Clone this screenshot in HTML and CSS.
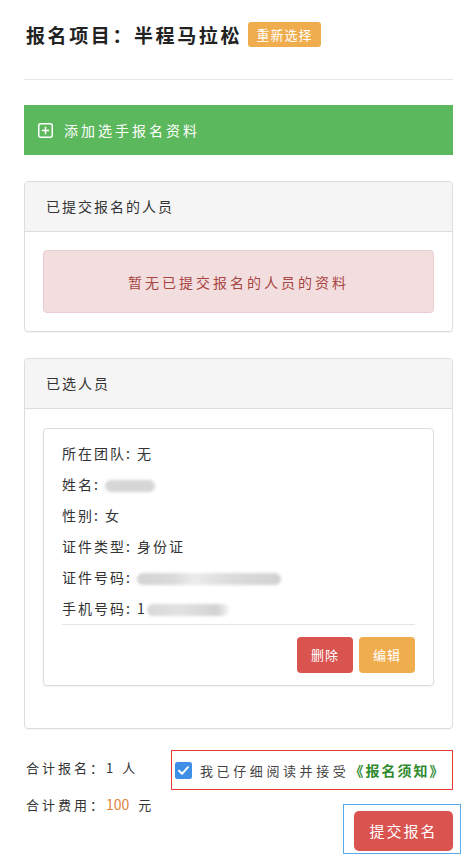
FILE: index.html
```html
<!DOCTYPE html>
<html lang="zh-CN">
	<head>
		<meta charset="utf-8">
		<meta name="viewport" content="width=device-width, initial-scale=1.0">
		<link rel="stylesheet" href="styles.css">
	</head>
	<body>

		<div class="page">

			<div class="title">
				<h1>报名项目：半程马拉松</h1>
				<a class="btn-rechoose" href="#">重新选择</a>
			</div>

			<hr class="divider">

			<a class="add-bar" href="#">
				<svg class="add-icon" width="15" height="15" viewBox="0 0 15 15">
					<rect x="0.75" y="0.75" width="13.5" height="13.5" rx="2" fill="none" stroke="#fff" stroke-width="1.5"/>
					<path d="M7.5 3.8v7.4M3.8 7.5h7.4" stroke="#fff" stroke-width="1.5"/>
				</svg>
				<span>添加选手报名资料</span>
			</a>

			<div class="panel">
				<div class="panel-head">已提交报名的人员</div>
				<div class="panel-body">
					<div class="alert">暂无已提交报名的人员的资料</div>
				</div>
			</div>

			<div class="panel panel-selected">
				<div class="panel-head">已选人员</div>
				<div class="panel-body">
					<div class="person">
						<ul class="person-info">
							<li>所在团队: 无</li>
							<li>姓名: <span class="blur blur-name"></span></li>
							<li>性别: 女</li>
							<li>证件类型: 身份证</li>
							<li>证件号码: <span class="blur blur-id"></span></li>
							<li>手机号码: 1<span class="blur blur-phone"></span></li>
						</ul>
						<div class="person-actions">
							<a class="btn btn-red" href="#">删除</a>
							<a class="btn btn-orange" href="#">编辑</a>
						</div>
					</div>
				</div>
			</div>

			<div class="summary">
				<div class="totals">
					<p>合计报名：1 人</p>
					<p>合计费用：<span class="fee">100</span> 元</p>
				</div>
				<div class="confirm">
					<label class="agree">
						<svg class="check" width="17" height="17" viewBox="0 0 17 17">
							<rect width="17" height="17" rx="2.5" fill="#3f8fe6"/>
							<path d="M4 8.8l3 3 6-6.6" fill="none" stroke="#fff" stroke-width="2" stroke-linecap="round" stroke-linejoin="round"/>
						</svg>
						<span>我已仔细阅读并接受</span><a class="notice" href="#">《报名须知》</a>
					</label>
					<div class="submit-wrap">
						<a class="btn-submit" href="#">提交报名</a>
					</div>
				</div>
			</div>

		</div>

	</body>
</html>
```

FILE: styles.css
```css
body {
	margin: 0;
	background-color: #fff;
	color: #333;
	font-family: "Noto Sans CJK SC", "Noto Sans", sans-serif;
	font-size: 14px;
}

a {
	text-decoration: none;
}

.page {
	padding: 22px 20px 0 24px;
}

/* title */

.title {
	display: flex;
	align-items: center;
	height: 25px;
	padding-left: 2px;
}

.title h1 {
	margin: 0;
	font-size: 19px;
	font-weight: bold;
	letter-spacing: 2.6px;
	color: #222;
}

.btn-rechoose {
	display: inline-block;
	margin-left: 6px;
	width: 73px;
	height: 25px;
	line-height: 25px;
	text-align: center;
	background-color: #f0ad4e;
	border-radius: 3px;
	color: #fff;
	font-size: 13px;
	letter-spacing: 1px;
}

.divider {
	border: 0;
	border-top: 1px solid #e6e6e6;
	margin: 32px 0 25px 0;
}

/* green bar */

.add-bar {
	display: flex;
	align-items: center;
	height: 50px;
	padding-left: 14px;
	background-color: #5cb85c;
	color: #fff;
	font-size: 14px;
	letter-spacing: 3px;
}

.add-icon {
	margin-right: 11px;
}

/* panels */

.panel {
	margin-top: 26px;
	border: 1px solid #ddd;
	border-radius: 4px;
	box-shadow: 0 1px 1px rgba(0, 0, 0, .04);
}

.panel-head {
	height: 49px;
	line-height: 49px;
	padding-left: 21px;
	background-color: #f5f5f5;
	border-bottom: 1px solid #ddd;
	border-radius: 4px 4px 0 0;
	letter-spacing: 2px;
}

.panel-body {
	padding: 18px 18px 18px 18px;
}

.alert {
	height: 63px;
	line-height: 63px;
	text-align: center;
	background-color: #f2dede;
	border: 1px solid #ebccd1;
	border-radius: 4px;
	color: #a94442;
	letter-spacing: 3px;
	box-sizing: border-box;
}

.panel-selected .panel-body {
	padding: 19px 18px 42px 18px;
}

.person {
	border: 1px solid #ddd;
	border-radius: 4px;
	padding: 9px 18px 12px 18px;
	box-shadow: 0 1px 2px rgba(0, 0, 0, .06);
}

.person-info {
	list-style: none;
	margin: 0;
	padding: 0;
	border-bottom: 1px solid #e5e5e5;
}

.person-info li {
	height: 31px;
	line-height: 31px;
	letter-spacing: 2px;
}

.blur {
	display: inline-block;
	height: 12px;
	vertical-align: middle;
	background-color: #d6d6d6;
	border-radius: 6px;
	filter: blur(1.5px);
}

.blur-name {
	width: 50px;
}

.blur-id {
	width: 144px;
	background: linear-gradient(90deg, #d4d4d4 0%, #dadada 25%, #ececec 40%, #dddddd 60%, #d2d2d2 100%);
}

.blur-phone {
	width: 82px;
	background: linear-gradient(90deg, #d8d8d8 0%, #e2e2e2 40%, #d2d2d2 85%, #f4f4f4 100%);
}

.person-actions {
	display: flex;
	justify-content: flex-end;
	gap: 6px;
	margin-top: 12px;
}

.btn {
	width: 56px;
	height: 36px;
	line-height: 36px;
	text-align: center;
	border-radius: 4px;
	color: #fff;
	font-size: 13px;
	letter-spacing: 1px;
}

.btn-red {
	background-color: #d9534f;
}

.btn-orange {
	background-color: #f0ad4e;
}

/* summary */

.summary {
	display: flex;
	justify-content: space-between;
	margin-top: 21px;
	padding-bottom: 16px;
}

.totals {
	padding-left: 2px;
}

.totals p {
	margin: 0;
	height: 36px;
	line-height: 36px;
	letter-spacing: 3px;
	font-size: 13px;
}

.fee {
	color: #e0853c;
	font-size: 14px;
	letter-spacing: 0;
	margin-right: 3px;
}

.confirm {
	display: flex;
	flex-direction: column;
	align-items: flex-end;
}

.agree {
	display: flex;
	align-items: center;
	width: 282px;
	height: 40px;
	box-sizing: border-box;
	padding-left: 3px;
	border: 1.5px solid #e53935;
	font-size: 13px;
	letter-spacing: 3.6px;
	color: #444;
	white-space: nowrap;
}

.check {
	margin-right: 8px;
}

.notice {
	color: #2e8b2e;
	font-weight: bold;
	font-size: 14px;
	letter-spacing: 2px;
}

.submit-wrap {
	margin-top: 14px;
	margin-right: -8px;
	padding: 6px 7px 2px 10px;
	border: 1.5px solid #5aa9e6;
}

.btn-submit {
	display: block;
	width: 99px;
	height: 40px;
	line-height: 40px;
	text-align: center;
	background-color: #d9534f;
	border-radius: 5px;
	color: #fff;
	font-size: 15px;
	letter-spacing: 2px;
}
```
